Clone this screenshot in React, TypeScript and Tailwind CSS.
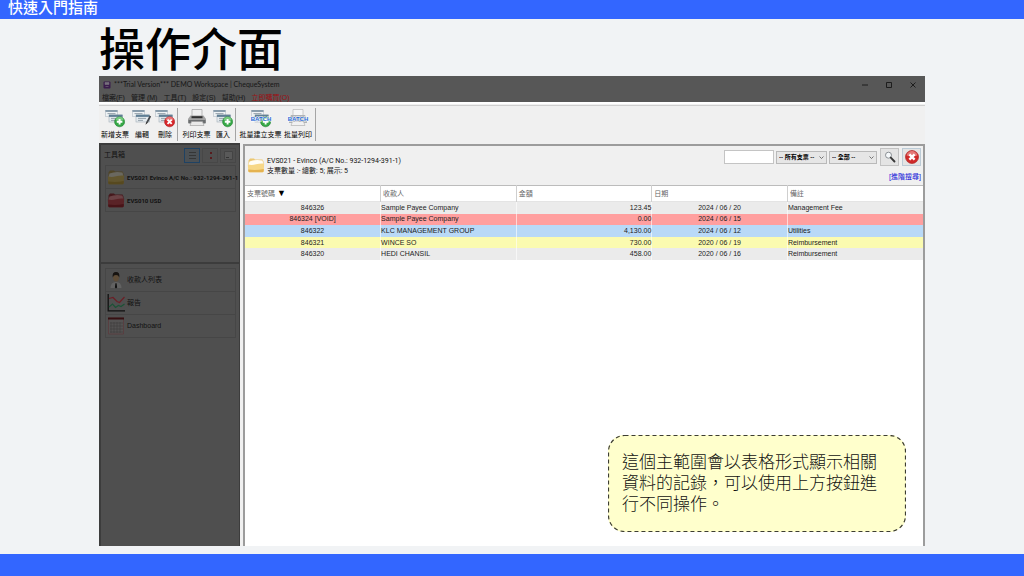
import React from 'react';

type IconProps = { className?: string };

/* Toolbar icons */

const ChequeShape = () => (
  <g>
    <rect x="0.5" y="2.5" width="12" height="6" fill="#eef2f4" stroke="#b4bfc6" strokeWidth="0.6" />
    <path d="M0.5 3h12" stroke="#7f95a5" strokeWidth="1.8" />
    <rect x="4" y="7" width="13.5" height="7" fill="#e4eaee" stroke="#a3b0b9" strokeWidth="0.6" />
    <path d="M4 7.8h13.5" stroke="#607f95" strokeWidth="2.2" />
    <path d="M6 10.4h8M6 12.4h5M2.5 5.6h8" stroke="#8d9ba5" strokeWidth="0.9" />
  </g>
);

const PlusBadge = () => (
  <g>
    <circle cx="14.6" cy="13.8" r="5" fill="#36a846" stroke="#1f8031" strokeWidth="0.6" />
    <path d="M10.6 12q1-3.2 4-3.2t4 3.2q-4 1.6-8 0Z" fill="#78cb80" />
    <path d="M14.6 11v5.6M11.8 13.8h5.6" stroke="#fff" strokeWidth="1.9" />
  </g>
);

const ChequeAddIcon: React.FC<IconProps> = ({ className }) => (
  <svg viewBox="0 0 20 20" className={className}>
    <ChequeShape />
    <PlusBadge />
  </svg>
);

const ChequeEditIcon: React.FC<IconProps> = ({ className }) => (
  <svg viewBox="0 0 20 20" className={className}>
    <ChequeShape />
    <path d="M18.4 8 15 14.5" stroke="#44484c" strokeWidth="1.7" />
    <path d="m14.3 13.9-.8 2.9 2.2-2Z" fill="#222" />
  </svg>
);

const ChequeDeleteIcon: React.FC<IconProps> = ({ className }) => (
  <svg viewBox="0 0 20 20" className={className}>
    <ChequeShape />
    <circle cx="14.6" cy="13.8" r="5" fill="#d8282c" stroke="#ab1519" strokeWidth="0.6" />
    <path d="M10.6 12q1-3.2 4-3.2t4 3.2q-4 1.6-8 0Z" fill="#ea7474" />
    <path d="m12.5 11.7 4.2 4.2m0-4.2-4.2 4.2" stroke="#fff" strokeWidth="1.9" />
  </svg>
);

const PrinterIcon: React.FC<IconProps> = ({ className }) => (
  <svg viewBox="0 0 20 20" className={className}>
    <path d="M5 1.5h10V9H5Z" fill="#eee" stroke="#a0a0a0" strokeWidth="0.7" />
    <path d="M3.5 7.5h13l2.5 3.5v4H1v-4Z" fill="#a2a2a2" />
    <path d="M1.5 12h17v3.5h-17Z" fill="#6b6e70" />
    <path d="M4.5 8.2h11v2h-11Z" fill="#303030" />
    <path d="M4.5 13.5h11l1.5 4H3Z" fill="#e9e9e9" stroke="#999" strokeWidth="0.6" />
  </svg>
);

const BatchLabel = () => (
  <text
    x="10" y="13" textAnchor="middle" fontSize="6" fontWeight="700" fill="#2468d6" stroke="#fff" strokeWidth="0.8" paintOrder="stroke"
    className="font-['Liberation_Sans',sans-serif]"
  >
    BATCH
  </text>
);

const BatchAddIcon: React.FC<IconProps> = ({ className }) => (
  <svg viewBox="0 0 20 20" className={`overflow-visible ${className}`}>
    <ChequeShape />
    <PlusBadge />
    <BatchLabel />
  </svg>
);

const BatchPrintIcon: React.FC<IconProps> = ({ className }) => (
  <svg viewBox="0 0 20 20" className={`overflow-visible ${className}`}>
    <path d="M5 1.5h10V9H5Z" fill="#f7f7f7" stroke="#b0b0b0" strokeWidth="0.6" />
    <path d="M3 7h14l2 4v4H1v-4Z" fill="#b0b3b6" />
    <path d="M4.5 13.5h11l1.5 4H3Z" fill="#f1f1f1" stroke="#aaa" strokeWidth="0.6" />
    <BatchLabel />
  </svg>
);

/* Folder and side panel icons */

const FolderIcon: React.FC<IconProps & { back: string; front: string; edge: string; paper: string }> = ({
  className, back, front, edge, paper,
}) => (
  <svg viewBox="0 0 18 18" className={className}>
    <path d="M1.5 4.5 3 2.5h4l1 1h7.5l1 2v5h-15Z" fill={back} />
    <path d="M2.5 5.5q6-2.5 13-1l1 4.5h-15Z" fill={paper} />
    <path d="M.8 8.5Q5 9.5 9 8.3t8.2-.8l-.5 7.5q-.1 1.2-1.3 1.2H2.6q-1.1 0-1.3-1.2Z" fill={front} />
    <path d="M1.2 13.5q8 1 15.6-.5l-.1 2q-.1 1.2-1.3 1.2H2.6q-1.1 0-1.3-1.2Z" fill={edge} />
  </svg>
);

const PersonIcon: React.FC<IconProps> = ({ className }) => (
  <svg viewBox="0 0 18 18" className={className}>
    <path d="M3.5 17q0-6 5.5-6t5.5 6Z" fill="#626262" />
    <path d="m8.4 12.4.6-.4.6.4.5 4-1.1 1-1.1-1Z" fill="#111" />
    <ellipse cx="9" cy="6.6" rx="2.9" ry="4" fill="#5f4d38" />
    <path d="M5.7 6.4Q5 1 9 1t3.3 5.4Q11.5 4 9 4T5.7 6.4Z" fill="#171310" />
  </svg>
);

const ChartIcon: React.FC<IconProps> = ({ className }) => (
  <svg viewBox="0 0 18 18" className={className} fill="none">
    <path d="M1.2 0v16.8H18" stroke="#111" strokeWidth="1.3" />
    <path d="m2 4.5 4-1 4 4 2.5 1L17.5 3" stroke="#6b1f26" strokeWidth="1.2" />
    <path d="m2 13 3.5-3 3 3.5 3-2 2.5 1 3.5-2.5" stroke="#1c5236" strokeWidth="1.2" />
  </svg>
);

const CalendarIcon: React.FC<IconProps> = ({ className }) => (
  <svg viewBox="0 0 18 18" className={className} fill="none">
    <path d="M1.5 1h15v16h-15Z" fill="#545252" stroke="#5b3b3d" strokeWidth="0.8" />
    <path d="M1 1.5h16" stroke="#351012" strokeWidth="2" />
    <path d="M4 5v11M7 5v11M10 5v11M13 5v11M3 6h13M3 9h13M3 12h13M3 15h13" stroke="#3c3c3c" strokeWidth="0.6" />
  </svg>
);

const SearchIcon: React.FC<IconProps> = ({ className }) => (
  <svg viewBox="0 0 12 12" className={className} fill="none">
    <circle cx="4.5" cy="4.2" r="3" fill="#f6f9fb" stroke="#8b9095" strokeWidth="1" />
    <path d="m6.8 6.6 3.7 3.9" stroke="#383838" strokeWidth="1.9" strokeLinecap="round" />
  </svg>
);

const ClearIcon: React.FC<IconProps> = ({ className }) => (
  <svg viewBox="0 0 14 14" className={className}>
    <circle cx="7" cy="7" r="6.5" fill="#d02a2a" stroke="#a81818" strokeWidth="0.6" />
    <path d="M1.5 5.5Q3 1 7 1t5.5 4.5Q7 7 1.5 5.5Z" fill="#e57a78" />
    <path d="m4.4 4.4 5.2 5.2m0-5.2-5.2 5.2" stroke="#fff" strokeWidth="2.4" />
  </svg>
);

const AppIcon: React.FC<IconProps> = ({ className }) => (
  <svg viewBox="0 0 8 8" className={className}>
    <rect x="0.5" y="0.5" width="7" height="7" rx="1" fill="#3a1c4c" />
    <path d="M2 1.5h4v2H2ZM2.5 5.5h3" fill="#77707c" stroke="#77707c" strokeWidth="0.6" />
  </svg>
);

const ViewButton: React.FC<{ label: string; className: string; children: React.ReactNode }> = ({ label, className, children }) => (
  <button type="button" aria-label={label} className={`flex h-[15px] w-[16px] items-center justify-center border ${className}`}>
    <svg viewBox="0 0 9 9" className="h-[9px] w-[9px]" fill="none">{children}</svg>
  </button>
);

const menus = ['檔案(F)', '管理 (M)', '工具(T)', '設定(S)', '幫助(H)'];

const toolbarGroups = [
  [
    { label: '新增支票', Icon: ChequeAddIcon, width: 'w-[30px]' },
    { label: '編輯', Icon: ChequeEditIcon, width: 'w-[24px]' },
    { label: '刪除', Icon: ChequeDeleteIcon, width: 'w-[22px]' },
  ],
  [
    { label: '列印支票', Icon: PrinterIcon, width: 'w-[31px]' },
    { label: '匯入', Icon: ChequeAddIcon, width: 'w-[22px]' },
  ],
  [
    { label: '批量建立支票', Icon: BatchAddIcon, width: 'w-[43px]' },
    { label: '批量列印', Icon: BatchPrintIcon, width: 'w-[32px]' },
  ],
];

const accounts = [
  { label: 'EVS021 Evinco A/C No.: 932-1294-391-1', back: '#504526', front: '#62562f', edge: '#57491f', paper: '#6a685f' },
  { label: 'EVS010 USD', back: '#45181c', front: '#5a2327', edge: '#481418', paper: '#6a4245' },
];

const links = [
  { label: '收款人列表', Icon: PersonIcon },
  { label: '報告', Icon: ChartIcon },
  { label: 'Dashboard', Icon: CalendarIcon },
];

const columns = ['支票號碼', '收款人', '金額', '日期', '備註'];

const cheques = [
  { no: '846326', payee: 'Sample Payee Company', amount: '123.45', date: '2024 / 06 / 20', note: 'Management Fee', color: 'bg-[#ebebeb]' },
  { no: '846324 [VOID]', payee: 'Sample Payee Company', amount: '0.00', date: '2024 / 06 / 15', note: '', color: 'bg-[#ff9f9f]' },
  { no: '846322', payee: 'KLC MANAGEMENT GROUP', amount: '4,130.00', date: '2024 / 06 / 12', note: 'Utilities', color: 'bg-[#b9d9f7]' },
  { no: '846321', payee: 'WINCE SO', amount: '730.00', date: '2020 / 06 / 19', note: 'Reimbursement', color: 'bg-[#fbfbb0]' },
  { no: '846320', payee: 'HEDI CHANSIL', amount: '458.00', date: '2020 / 06 / 16', note: 'Reimbursement', color: 'bg-[#ebebeb]' },
];

const TitleBar = () => (
  <div className="h-[26px] bg-[#575757] text-[#161616]">
    <div className="flex h-[17px] items-center px-1">
      <AppIcon className="mr-[3px] h-2 w-2" />
      <span className="font-['Lato',sans-serif] text-[7px]">***Trial Version*** DEMO Workspace | ChequeSystem</span>
      <div className="ml-auto flex items-center gap-[18px] pr-[5px]">
        <button type="button" aria-label="Minimize">
          <svg viewBox="0 0 6 6" className="h-[6px] w-[6px]"><path d="M0 3h6" stroke="#161616" strokeWidth="0.9" /></svg>
        </button>
        <button type="button" aria-label="Maximize">
          <svg viewBox="0 0 6 6" className="h-[6px] w-[6px]"><path d="M.5.5h5v5h-5Z" fill="none" stroke="#161616" strokeWidth="0.9" /></svg>
        </button>
        <button type="button" aria-label="Close">
          <svg viewBox="0 0 6 6" className="h-[6px] w-[6px]"><path d="m.5.5 5 5m0-5-5 5" stroke="#161616" strokeWidth="0.9" /></svg>
        </button>
      </div>
    </div>
    <nav className="flex h-[9px] items-center gap-[6px] pl-[3px] text-[7px] leading-[9px] whitespace-nowrap">
      {menus.map((menu) => (
        <button key={menu} type="button">{menu}</button>
      ))}
      <button type="button" className="text-[#9e1013]">立即購買(O)</button>
    </nav>
  </div>
);

const Toolbar = () => (
  <div className="flex h-[41px] border-t-2 border-white bg-[#f0f0f0] pt-px">
    <div className="flex flex-1 border-t border-[#cfcfcf] pl-px">
      {toolbarGroups.map((group, i) => (
        <div key={i} className="my-[2px] mr-[3px] flex border-r border-[#a5a5a5] pr-px">
          {group.map(({ label, Icon, width }) => (
            <button key={label} type="button" className={`flex flex-col items-center whitespace-nowrap text-black ${width}`}>
              <Icon className="h-[20px] w-[20px]" />
              <span className="mt-[2px] text-[7px] leading-[10px]">{label}</span>
            </button>
          ))}
        </div>
      ))}
    </div>
  </div>
);

const Sidebar = () => (
  <aside className="w-[141px] shrink-0 border-2 border-r border-b-0 border-[#3c3c3c] bg-[#4f4f4f] text-[#121212]">
    <div className="h-[119px] border-b-2 border-[#3c3c3c]">
      <div className="flex h-5 items-center px-[3px]">
        <h2 className="flex-1 text-[7px]">工具箱</h2>
        <div className="flex gap-[2px]">
          <ViewButton label="List view" className="border-[#1f4263] bg-[#4b5054]">
            <path d="M1 1.5h7M1 4.5h7M1 7.5h7" stroke="#333" strokeWidth="0.9" />
          </ViewButton>
          <ViewButton label="Tree view" className="border-[#474747]">
            <path d="M4 1h2v2H4ZM4 6h2v2H4Z" fill="#571b1d" />
          </ViewButton>
          <ViewButton label="Card view" className="border-[#474747]">
            <path d="M.5.5h8v8h-8Z" fill="#595959" stroke="#444" />
            <path d="M2 6.5h3" stroke="#333" />
          </ViewButton>
        </div>
      </div>
      <ul className="mr-[3px] ml-1 border border-[#464646]">
        {accounts.map(({ label, ...colors }) => (
          <li key={label} className="border-b border-[#464646] last:border-b-0">
            <button type="button" className="flex h-[22px] w-full items-center gap-[2px] pl-px font-['Roboto',sans-serif] text-[6px] font-bold whitespace-nowrap">
              <FolderIcon {...colors} className="h-[18px] w-[18px] shrink-0" />
              {label}
            </button>
          </li>
        ))}
      </ul>
    </div>
    <ul className="mt-1 mr-[3px] ml-1 border border-[#464646]">
      {links.map(({ label, Icon }) => (
        <li key={label} className="border-b border-[#464646] last:border-b-0">
          <button type="button" className="flex h-[22px] w-full items-center gap-[2px] pl-px text-[7px]">
            <Icon className="h-[18px] w-[18px]" />
            {label}
          </button>
        </li>
      ))}
    </ul>
  </aside>
);

const FilterSelect: React.FC<{ label: string; option: string; width: string }> = ({ label, option, width }) => (
  <div className={`relative h-[13px] ${width}`}>
    <select aria-label={label} className="block h-[13px] w-full appearance-none border border-[#b9b9b9] bg-[#e6e6e6] pl-[2px] text-[6px] leading-[11px] font-bold">
      <option>{option}</option>
    </select>
    <svg viewBox="0 0 5 3" className="pointer-events-none absolute top-[5px] right-[3px] h-[3px] w-[5px]" fill="none">
      <path d="m.5.5 2 2 2-2" stroke="#555" strokeWidth="0.8" />
    </svg>
  </div>
);

const AccountHeader = () => (
  <div className="flex h-[39px] bg-[#f0f0f0] pl-[2px]">
    <FolderIcon className="mt-[10px] h-[18px] w-[18px]" back="#ecc873" front="#f7d888" edge="#e5b350" paper="#fffdf6" />
    <div className="mt-[10px] ml-[2px] font-['Roboto','Noto_Sans_CJK_TC',sans-serif] text-[7px] leading-[10px] text-[#111]">
      <p>EVS021 - Evinco (A/C No.: 932-1294-391-1)</p>
      <p>支票數量 :- 總數: 5; 展示: 5</p>
    </div>
    <div className="mt-[2px] mr-[2px] ml-auto flex flex-col items-end">
      <div className="flex h-[18px] items-center gap-[2px]">
        <input type="text" aria-label="Search" className="h-[14px] w-[50px] border border-[#c4c4c4] bg-white px-1 text-[7px]" />
        <FilterSelect label="Cheque type" option="-- 所有支票 --" width="w-[51px]" />
        <FilterSelect label="Status" option="-- 全部 --" width="w-[48px]" />
        <button type="button" aria-label="Find" className="ml-px flex h-[18px] w-[19px] items-center justify-center border border-[#c2c2c2] bg-[#e4e4e4]">
          <SearchIcon className="h-3 w-3" />
        </button>
        <button type="button" aria-label="Clear" className="ml-px flex h-[18px] w-[19px] items-center justify-center border border-[#bccbd6] bg-[#e4e4e4]">
          <ClearIcon className="h-[14px] w-[14px]" />
        </button>
      </div>
      <a href="#advanced" className="mt-[6px] text-[7px] leading-[10px] text-[#1414d8]">[進階搜尋]</a>
    </div>
  </div>
);

const ChequeTable = () => (
  <table className="h-[75px] w-full table-fixed border-collapse text-[7px] leading-[10px] text-[#1c1c1c]">
    <thead>
      <tr className="h-[16px] border-y border-t-[#bcbcbc] border-b-[#e4e4e4]">
        {columns.map((column, i) => (
          <th key={column} scope="col" className="border-r border-[#cfcfcf] px-[2px] py-0 text-left font-normal text-[#666] last:border-r-0">
            {column}
            {i === 0 && <span className="ml-[2px] text-[9px] text-black">▼</span>}
          </th>
        ))}
      </tr>
    </thead>
    <tbody>
      {cheques.map((row) => (
        <tr key={row.no} className={row.color}>
          <td className="border-r border-white/60 p-0 text-center">{row.no}</td>
          <td className="border-r border-white/60 p-0">{row.payee}</td>
          <td className="border-r border-white/60 p-0 text-right">{row.amount}</td>
          <td className="border-r border-white/60 p-0 text-center">{row.date}</td>
          <td className="p-0">{row.note}</td>
        </tr>
      ))}
    </tbody>
  </table>
);

const Callout = () => (
  <div className="absolute right-[19px] bottom-[14px] flex h-[97px] w-[298px] items-center rounded-2xl bg-[#ffffcc] pr-6 pl-[14px]">
    <svg className="absolute inset-0 h-full w-full" fill="none" aria-hidden="true">
      <rect x="0.5" y="0.5" rx="16" className="h-[calc(100%-1px)] w-[calc(100%-1px)]" stroke="#3d3d33" strokeWidth="1.2" strokeDasharray="4 3" />
    </svg>
    <p className="text-[17px] leading-[21px] font-light text-[#111]">
      這個主範圍會以表格形式顯示相關資料的記錄，可以使用上方按鈕進行不同操作。
    </p>
  </div>
);

export default function App() {
  return (
    <div className="flex min-h-screen flex-col bg-[#f1f3f5] font-['Liberation_Sans','Noto_Sans_CJK_TC',sans-serif]">
      <header className="h-[19px] bg-[#3366ff] pl-2 text-[15px] leading-[15px] font-medium text-white">快速入門指南</header>
      <main className="mx-[99px] mb-2 flex flex-1 flex-col">
        <h1 className="h-[57px] text-[46px] leading-[62px] font-medium text-black">操作介面</h1>
        <section className="relative flex flex-1 flex-col bg-[#f0f0f0]">
          <TitleBar />
          <Toolbar />
          <div className="flex flex-1">
            <Sidebar />
            <div className="mt-px ml-[3px] flex-1 border-t-2 border-r-2 border-l-2 border-[#9c9c9c] bg-white">
              <AccountHeader />
              <ChequeTable />
            </div>
          </div>
          <Callout />
        </section>
      </main>
      <footer className="h-[22px] bg-[#3366ff]" />
    </div>
  );
}
